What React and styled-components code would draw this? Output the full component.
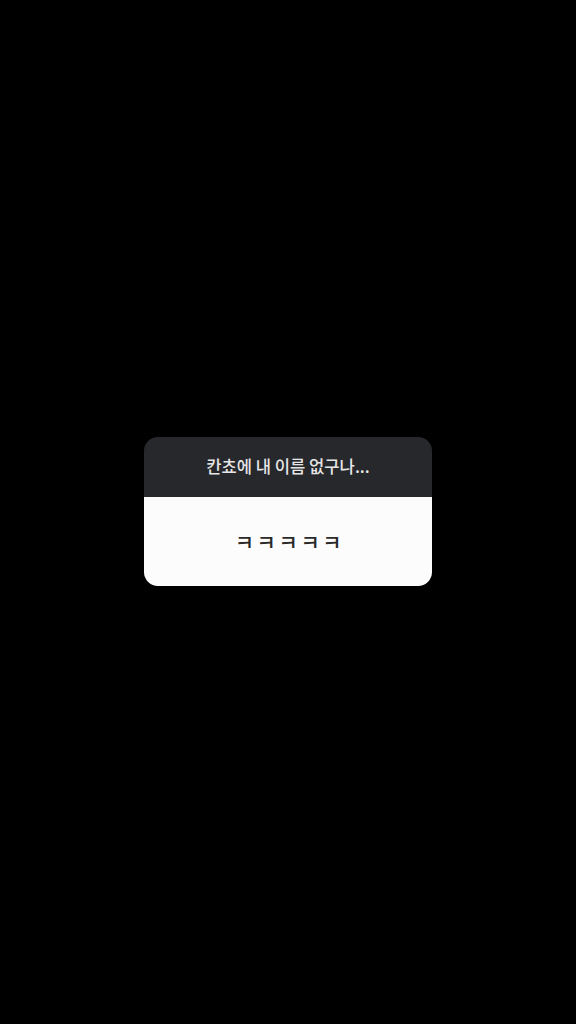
import React from "react";
import styled, { createGlobalStyle } from "styled-components";

const Global = createGlobalStyle`
  html, body { margin: 0; padding: 0; background: #000; }
  body { font-family: "Noto Sans CJK KR", "Noto Sans", sans-serif; }
`;

const Screen = styled.div`
  width: 576px;
  height: 1024px;
  background: #000;
  display: flex;
  align-items: flex-start;
  justify-content: center;
`;

const Card = styled.div`
  margin-top: 437px;
  width: 288px;
  border-radius: 14px;
  overflow: hidden;
  display: flex;
  flex-direction: column;
`;

const Question = styled.div`
  height: 60px;
  background: #27282c;
  color: #e6e6e6;
  font-size: 16.6px;
  font-weight: 500;
  display: flex;
  align-items: center;
  justify-content: center;
  padding-bottom: 2px;
  box-sizing: border-box;
`;

const Answer = styled.div`
  height: 89px;
  background: #fcfcfc;
  color: #2a2a2a;
  font-size: 21px;
  font-weight: 500;
  letter-spacing: 2.6px;
  display: flex;
  align-items: center;
  justify-content: center;
  padding-bottom: 2px;
  padding-left: 3px;
  box-sizing: border-box;
`;

export default function App() {
  return (
    <>
      <Global />
      <Screen>
        <Card>
          <Question>칸쵸에 내 이름 없구나...</Question>
          <Answer>ㅋㅋㅋㅋㅋ</Answer>
        </Card>
      </Screen>
    </>
  );
}
